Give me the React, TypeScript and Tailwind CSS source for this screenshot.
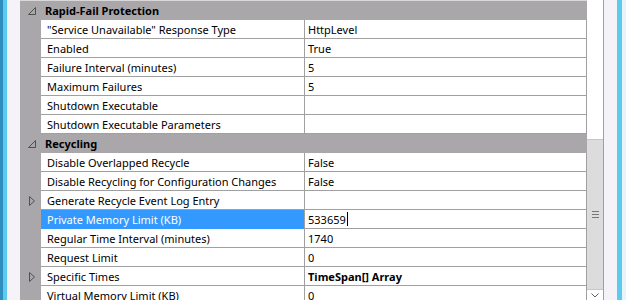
import React from 'react';

type Row = {
  name: string;
  value?: string;
  bold?: boolean;
  expandable?: boolean;
  selected?: boolean;
};

const rapidFail: Row[] = [
  { name: '"Service Unavailable" Response Type', value: 'HttpLevel' },
  { name: 'Enabled', value: 'True' },
  { name: 'Failure Interval (minutes)', value: '5' },
  { name: 'Maximum Failures', value: '5' },
  { name: 'Shutdown Executable', value: '' },
  { name: 'Shutdown Executable Parameters', value: '' },
];

const recycling: Row[] = [
  { name: 'Disable Overlapped Recycle', value: 'False' },
  { name: 'Disable Recycling for Configuration Changes', value: 'False' },
  { name: 'Generate Recycle Event Log Entry', value: '', expandable: true },
  { name: 'Private Memory Limit (KB)', value: '533659', selected: true },
  { name: 'Regular Time Interval (minutes)', value: '1740' },
  { name: 'Request Limit', value: '0' },
  { name: 'Specific Times', value: 'TimeSpan[] Array', bold: true, expandable: true },
  { name: 'Virtual Memory Limit (KB)', value: '0' },
];

const ExpandedGlyph = () => (
  <svg width="8" height="8" viewBox="0 0 8 8" className="block">
    <polygon points="0.5,7.5 7.5,0.5 7.5,7.5" fill="none" stroke="#505050" strokeWidth="1" />
  </svg>
);

const CollapsedGlyph = () => (
  <svg width="6" height="10" viewBox="0 0 6 10" className="block">
    <polygon points="0.5,0.5 5.5,5 0.5,9.5" fill="none" stroke="#505050" strokeWidth="1" />
  </svg>
);

const Category: React.FC<{ title: string }> = ({ title }) => (
  <div className="flex h-[19px] shrink-0 items-center bg-[#a9a7aa]">
    <div className="flex w-[25px] justify-end pr-[9px]">
      <ExpandedGlyph />
    </div>
    <span className="font-bold text-black">{title}</span>
  </div>
);

const PropRow: React.FC<{ row: Row }> = ({ row }) => (
  <div className="flex h-[19px] shrink-0">
    <div className="flex w-[21px] items-center justify-end bg-[#a9a7aa] pr-[6px]">
      {row.expandable && <CollapsedGlyph />}
    </div>
    <div
      className={
        row.selected
          ? 'flex w-[263px] items-center border-b border-[#3399ff] bg-[#3399ff] pl-[6px] text-white'
          : 'flex w-[263px] items-center border-b border-[#a0a0a0] bg-white pl-[6px] text-black'
      }
    >
      {row.name}
    </div>
    <div className="w-px bg-[#a0a0a0]" />
    <div
      className={
        row.bold
          ? 'flex flex-1 items-center border-b border-r border-[#a0a0a0] bg-white pl-[3px] font-bold text-black'
          : 'flex flex-1 items-center border-b border-r border-[#a0a0a0] bg-white pl-[3px] text-black'
      }
    >
      {row.value}
      {row.selected && <span className="ml-px inline-block h-[14px] w-px bg-black" />}
    </div>
  </div>
);

export default function App() {
  return (
    <div
      className="flex h-[300px] w-[626px] overflow-hidden bg-[#f5f3f7] text-[11px] leading-none"
      style={{ fontFamily: '"Noto Sans", "Open Sans", sans-serif' }}
    >
      <div className="w-[3px] bg-[#2f8fbf]" />
      <div className="w-[4px] bg-[#5ccbf0]" />
      <div className="w-[13px] bg-[#f5f3f7]" />

      <div className="flex w-[567px] flex-col">
        <div className="h-px shrink-0 bg-[#d8d8d8]" />
        <Category title="Rapid-Fail Protection" />
        {rapidFail.map((r) => (
          <PropRow key={r.name} row={r} />
        ))}
        <Category title="Recycling" />
        {recycling.map((r) => (
          <PropRow key={r.name} row={r} />
        ))}
      </div>

      <div className="flex w-[16px] flex-col bg-white">
        <div className="h-[139px] shrink-0 bg-white" />
        <div className="flex h-[151px] shrink-0 items-center justify-center border-t border-b border-[#c6c6c6] bg-[#dcdcdc]">
          <div className="flex flex-col gap-[2px]">
            <div className="h-px w-[7px] bg-[#777]" />
            <div className="h-px w-[7px] bg-[#777]" />
            <div className="h-px w-[7px] bg-[#777]" />
          </div>
        </div>
        <div className="flex flex-1 justify-center pt-[3px]">
          <svg width="8" height="5" viewBox="0 0 8 5">
            <polyline points="0.5,0.5 4,4 7.5,0.5" fill="none" stroke="#606060" strokeWidth="1" />
          </svg>
        </div>
      </div>
      <div className="w-px bg-[#a0a0a0]" />
      <div className="w-[13px] bg-[#f5f3f7]" />
      <div className="w-[5px] bg-[#5ccbf0]" />
      <div className="flex-1 bg-[#e8f4fa]" />
    </div>
  );
}
